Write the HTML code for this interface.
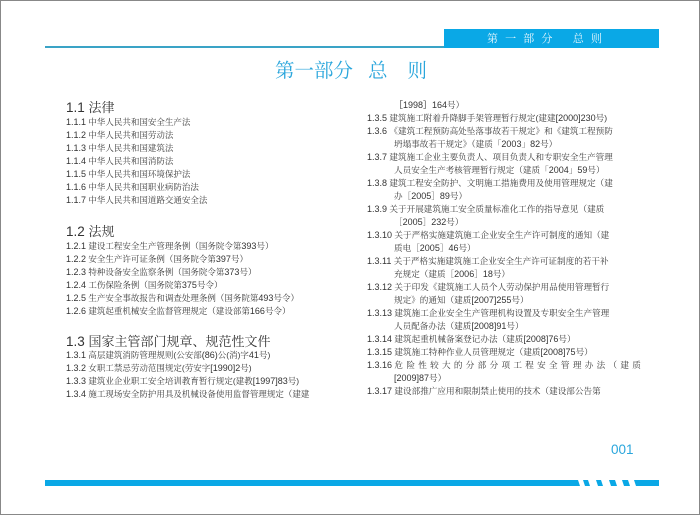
<!DOCTYPE html>
<html><head><meta charset="utf-8"><style>
html,body{margin:0;padding:0}
body{width:700px;height:515px;position:relative;background:#fff;overflow:hidden;font-family:"Liberation Sans","Noto Serif CJK SC",serif;color:#444}
.frame{position:absolute;left:0;top:0;width:698px;height:513px;border:1px solid #888}
.a{position:absolute;white-space:nowrap}
.col{position:absolute;font-size:8.5px;line-height:13px;color:#3a3a3a}
.col div{white-space:nowrap;height:13px}
.n{font-family:"Liberation Sans",sans-serif;font-size:9px;color:#333}
.h{font-size:13.5px;color:#333;font-family:"Liberation Sans","Noto Sans CJK SC",sans-serif}
.h span{font-family:"Liberation Serif","Noto Serif CJK SC",serif;font-size:13px}
.in{padding-left:27px}
.r{font-size:8.6px}
</style></head><body>
<div class="frame"></div>
<div class="a" style="left:45px;top:46px;width:400px;height:2px;background:#3aa3c6"></div>
<div class="a" style="left:444px;top:29px;width:215px;height:19px;background:#0aa8e6"></div>
<div class="a" style="left:487px;top:31px;font-size:11px;line-height:15px;color:#e6f6fd;font-family:'Noto Serif CJK SC',serif;letter-spacing:0.5px">第&nbsp;&nbsp;一&nbsp;&nbsp;部&nbsp;&nbsp;分&nbsp;&nbsp;&nbsp;&nbsp;&nbsp;&nbsp;总&nbsp;&nbsp;则</div>
<div class="a" style="left:275px;top:57px;font-size:19.5px;line-height:24px;color:#2aa6dc;font-family:'Noto Serif CJK SC',serif">第一部分&nbsp;&nbsp;&nbsp;总&nbsp;&nbsp;&nbsp;&nbsp;则</div>

<div class="a h" style="left:66px;top:100px;line-height:16px">1.1 <span>法律</span></div>
<div class="col" style="left:66px;top:116px">
<div><span class="n">1.1.1</span> 中华人民共和国安全生产法</div>
<div><span class="n">1.1.2</span> 中华人民共和国劳动法</div>
<div><span class="n">1.1.3</span> 中华人民共和国建筑法</div>
<div><span class="n">1.1.4</span> 中华人民共和国消防法</div>
<div><span class="n">1.1.5</span> 中华人民共和国环境保护法</div>
<div><span class="n">1.1.6</span> 中华人民共和国职业病防治法</div>
<div><span class="n">1.1.7</span> 中华人民共和国道路交通安全法</div>
</div>
<div class="a h" style="left:66px;top:224px;line-height:16px">1.2 <span>法规</span></div>
<div class="col" style="left:66px;top:240px">
<div><span class="n">1.2.1</span> 建设工程安全生产管理条例（国务院令第<span class="n">393</span>号）</div>
<div><span class="n">1.2.2</span> 安全生产许可证条例（国务院令第<span class="n">397</span>号）</div>
<div><span class="n">1.2.3</span> 特种设备安全监察条例（国务院令第<span class="n">373</span>号）</div>
<div><span class="n">1.2.4</span> 工伤保险条例（国务院第<span class="n">375</span>号令）</div>
<div><span class="n">1.2.5</span> 生产安全事故报告和调查处理条例（国务院第<span class="n">493</span>号令）</div>
<div><span class="n">1.2.6</span> 建筑起重机械安全监督管理规定（建设部第<span class="n">166</span>号令）</div>
</div>
<div class="a h" style="left:66px;top:334px;line-height:16px">1.3 <span>国家主管部门规章、规范性文件</span></div>
<div class="col" style="left:66px;top:349px">
<div><span class="n">1.3.1</span> 高层建筑消防管理规则(公安部<span class="n">(86)</span>公(消)字<span class="n">41</span>号)</div>
<div><span class="n">1.3.2</span> 女职工禁忌劳动范围规定(劳安字<span class="n">[1990]2</span>号)</div>
<div><span class="n">1.3.3</span> 建筑业企业职工安全培训教育暂行规定(建教<span class="n">[1997]83</span>号)</div>
<div><span class="n">1.3.4</span> 施工现场安全防护用具及机械设备使用监督管理规定（建建</div>
</div>

<div class="col r" style="left:367px;top:99px">
<div class="in"><span class="n">［1998］164</span>号）</div>
<div><span class="n">1.3.5</span> 建筑施工附着升降脚手架管理暂行规定(建建<span class="n">[2000]230</span>号)</div>
<div><span class="n">1.3.6</span> 《建筑工程预防高处坠落事故若干规定》和《建筑工程预防</div>
<div class="in">坍塌事故若干规定》（建质「<span class="n">2003</span>」<span class="n">82</span>号）</div>
<div><span class="n">1.3.7</span> 建筑施工企业主要负责人、项目负责人和专职安全生产管理</div>
<div class="in">人员安全生产考核管理暂行规定（建质「<span class="n">2004</span>」<span class="n">59</span>号）</div>
<div><span class="n">1.3.8</span> 建筑工程安全防护、文明施工措施费用及使用管理规定（建</div>
<div class="in">办［<span class="n">2005</span>］<span class="n">89</span>号）</div>
<div><span class="n">1.3.9</span> 关于开展建筑施工安全质量标准化工作的指导意见（建质</div>
<div class="in">［<span class="n">2005</span>］<span class="n">232</span>号）</div>
<div><span class="n">1.3.10</span> 关于严格实施建筑施工企业安全生产许可制度的通知（建</div>
<div class="in">质电［<span class="n">2005</span>］<span class="n">46</span>号）</div>
<div><span class="n">1.3.11</span> 关于严格实施建筑施工企业安全生产许可证制度的若干补</div>
<div class="in">充规定（建质［<span class="n">2006</span>］<span class="n">18</span>号）</div>
<div><span class="n">1.3.12</span> 关于印发《建筑施工人员个人劳动保护用品使用管理暂行</div>
<div class="in">规定》的通知（建质<span class="n">[2007]255</span>号）</div>
<div><span class="n">1.3.13</span> 建筑施工企业安全生产管理机构设置及专职安全生产管理</div>
<div class="in">人员配备办法（建质<span class="n">[2008]91</span>号）</div>
<div><span class="n">1.3.14</span> 建筑起重机械备案登记办法（建质<span class="n">[2008]76</span>号）</div>
<div><span class="n">1.3.15</span> 建筑施工特种作业人员管理规定（建质<span class="n">[2008]75</span>号）</div>
<div><span class="n">1.3.16</span> <span style="letter-spacing:3.3px">危险性较大的分部分项工程安全管理办法（建质</span></div>
<div class="in"><span class="n">[2009]87</span>号）</div>
<div><span class="n">1.3.17</span> 建设部推广应用和限制禁止使用的技术（建设部公告第</div>
</div>

<div class="a" style="left:611px;top:442px;font-size:13.5px;line-height:15px;color:#2aa6dc;font-family:'Liberation Sans',sans-serif">001</div>
<svg class="a" style="left:0;top:0" width="700" height="515">
<g fill="#0aa8e6">
<polygon points="45,480 578,480 580,486 45,486"/>
<polygon points="583,480 588,480 590,486 585,486"/>
<polygon points="596,480 601,480 603,486 598,486"/>
<polygon points="609,480 615,480 617,486 611,486"/>
<polygon points="622,480 628,480 630,486 624,486"/>
<polygon points="634,480 659,480 659,486 636,486"/>
</g></svg>
</body></html>
